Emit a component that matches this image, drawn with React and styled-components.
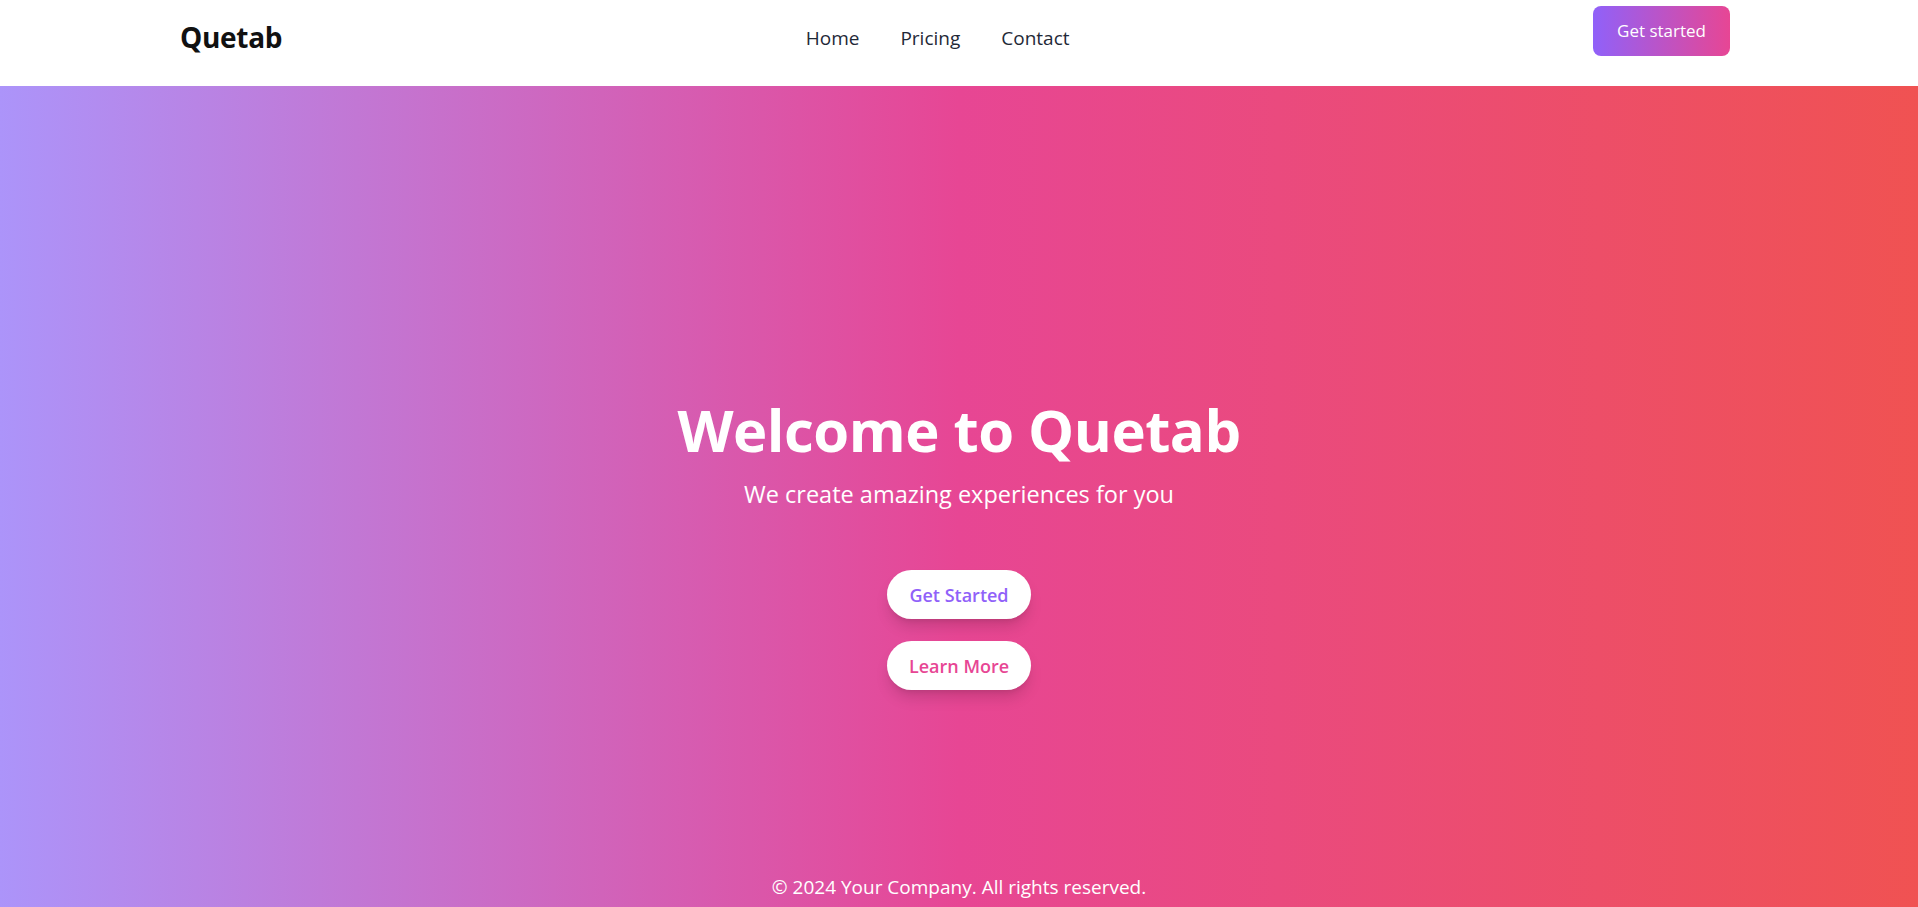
import React from "react";
import styled, { createGlobalStyle } from "styled-components";

const Global = createGlobalStyle`
  * { box-sizing: border-box; }
  html, body { margin: 0; padding: 0; }
  body {
    font-family: "Open Sans", "Noto Sans", sans-serif;
    background: linear-gradient(to right, #ac94fa, #e74694, #f05252);
    min-height: 100vh;
  }
`;

const Page = styled.div`
  min-height: 100vh;
  display: flex;
  flex-direction: column;
`;

const Header = styled.header`
  background: #ffffff;
  height: 86px;
  padding: 0 188px 0 180px;
  display: flex;
  align-items: center;
  justify-content: space-between;
`;

const Logo = styled.a`
  font-size: 28px;
  font-weight: 700;
  color: #111111;
  text-decoration: none;
  letter-spacing: -0.3px;
  margin-top: -12px;
`;

const Nav = styled.nav`
  display: flex;
  gap: 41px;
  margin-top: -10px;
`;

const NavLink = styled.a`
  font-size: 19px;
  color: #1f2937;
  text-decoration: none;
`;

const HeaderButton = styled.button`
  align-self: flex-start;
  margin-top: 6px;
  height: 50px;
  padding: 0 24px 2px;
  border: none;
  border-radius: 8px;
  background: linear-gradient(to right, #9061f9, #e74694);
  color: #ffffff;
  font-family: inherit;
  font-size: 17px;
  cursor: pointer;
`;

const Hero = styled.main`
  flex: 1;
  display: flex;
  flex-direction: column;
  align-items: center;
  padding-top: 315px;
  color: #ffffff;
  text-align: center;
`;

const Title = styled.h1`
  margin: 0;
  font-size: 58px;
  line-height: 1;
  font-weight: 700;
  letter-spacing: -0.5px;
`;

const Subtitle = styled.p`
  margin: 19px 0 0;
  font-size: 23.5px;
  line-height: 32px;
`;

const Actions = styled.div`
  margin-top: 60px;
  display: flex;
  flex-direction: column;
  align-items: center;
  gap: 22px;
`;

const PillButton = styled.button`
  height: 49px;
  width: 144px;
  border: none;
  border-radius: 999px;
  background: #ffffff;
  color: ${(p) => p.$color};
  font-family: inherit;
  font-size: 18px;
  font-weight: 600;
  box-shadow: 0 10px 15px -3px rgba(0, 0, 0, 0.15), 0 4px 6px -4px rgba(0, 0, 0, 0.12);
  cursor: pointer;
`;

const Footer = styled.footer`
  padding: 0 0 8px;
  text-align: center;
  color: #ffffff;
  font-size: 19px;
  line-height: 24px;
`;

export default function App() {
  return (
    <>
      <Global />
      <Page>
        <Header>
          <Logo href="#">Quetab</Logo>
          <Nav>
            <NavLink href="#">Home</NavLink>
            <NavLink href="#">Pricing</NavLink>
            <NavLink href="#">Contact</NavLink>
          </Nav>
          <HeaderButton>Get started</HeaderButton>
        </Header>
        <Hero>
          <Title>Welcome to Quetab</Title>
          <Subtitle>We create amazing experiences for you</Subtitle>
          <Actions>
            <PillButton $color="#9061f9">Get Started</PillButton>
            <PillButton $color="#e74694">Learn More</PillButton>
          </Actions>
        </Hero>
        <Footer>© 2024 Your Company. All rights reserved.</Footer>
      </Page>
    </>
  );
}
